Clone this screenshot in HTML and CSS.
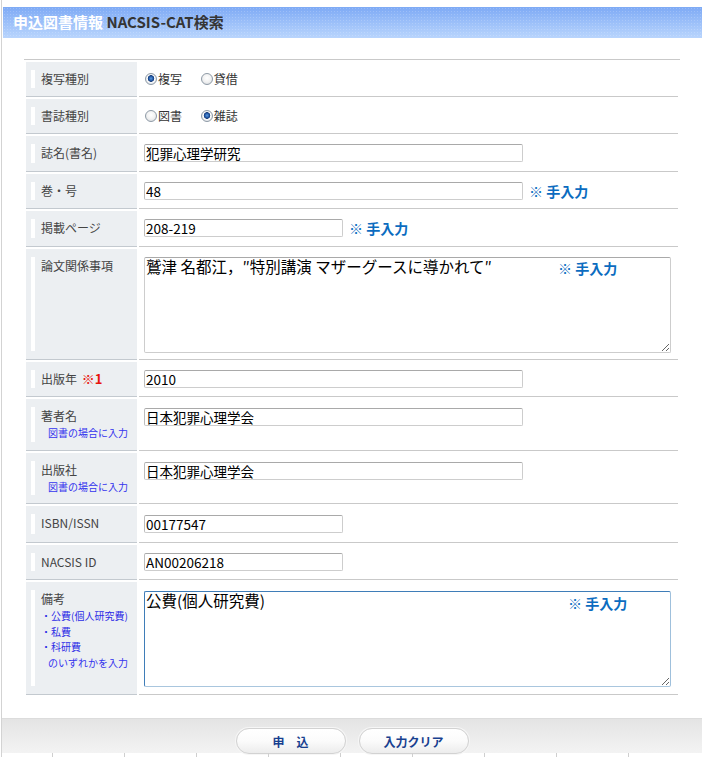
FILE: index.html
```html
<!DOCTYPE html>
<html lang="ja">
<head>
<meta charset="utf-8">
<title>申込図書情報 NACSIS-CAT検索</title>
<link rel="stylesheet" href="styles.css">
</head>
<body>
<div class="page">
  <h1 class="title"><span class="title-main">申込図書情報</span> <span class="title-sub">NACSIS-CAT検索</span></h1>

  <table class="form">
    <tr>
      <th>複写種別</th>
      <td class="choices">
        <label class="choice"><input type="radio" name="kind" checked>複写</label>
        <label class="choice"><input type="radio" name="kind">貸借</label>
      </td>
    </tr>
    <tr>
      <th>書誌種別</th>
      <td class="choices">
        <label class="choice"><input type="radio" name="biblio">図書</label>
        <label class="choice"><input type="radio" name="biblio" checked>雑誌</label>
      </td>
    </tr>
    <tr class="plus">
      <th>誌名(書名)</th>
      <td><input class="field wide" type="text" value="犯罪心理学研究"></td>
    </tr>
    <tr>
      <th>巻・号</th>
      <td><input class="field wide" type="text" value="48"><span class="manual">※ 手入力</span></td>
    </tr>
    <tr class="plus">
      <th>掲載ページ</th>
      <td><input class="field short" type="text" value="208-219"><span class="manual">※ 手入力</span></td>
    </tr>
    <tr class="area-row">
      <th>論文関係事項</th>
      <td class="area-cell">
        <textarea class="area">鷲津 名都江，″特別講演 マザーグースに導かれて″</textarea>
        <span class="manual over over-paper">※ 手入力</span>
      </td>
    </tr>
    <tr>
      <th>出版年 <span class="required">※1</span></th>
      <td><input class="field wide" type="text" value="2010"></td>
    </tr>
    <tr class="note-row">
      <th>著者名<span class="hint">図書の場合に入力</span></th>
      <td class="top9"><input class="field wide" type="text" value="日本犯罪心理学会"></td>
    </tr>
    <tr class="note-row short-note">
      <th>出版社<span class="hint">図書の場合に入力</span></th>
      <td class="top9"><input class="field wide" type="text" value="日本犯罪心理学会"></td>
    </tr>
    <tr class="plus">
      <th>ISBN/ISSN</th>
      <td class="top9"><input class="field short" type="text" value="00177547"></td>
    </tr>
    <tr>
      <th>NACSIS ID</th>
      <td><input class="field short" type="text" value="AN00206218"></td>
    </tr>
    <tr class="area-row memo-row">
      <th>備考
        <span class="hint-item">・公費(個人研究費)</span>
        <span class="hint-item">・私費</span>
        <span class="hint-item">・科研費</span>
        <span class="hint">のいずれかを入力</span>
      </th>
      <td class="area-cell">
        <textarea class="area focused">公費(個人研究費)</textarea>
        <span class="manual over over-memo">※ 手入力</span>
      </td>
    </tr>
  </table>

  <div class="actions">
    <button class="btn" type="button">申　込</button>
    <button class="btn" type="button">入力クリア</button>
  </div>
  <div class="grid">
    <span></span><span></span><span></span><span></span><span></span>
    <span></span><span></span><span></span><span></span>
  </div>
</div>
</body>
</html>
```

FILE: styles.css
```css
html, body {
  margin: 0;
  padding: 0;
  background: #fff;
}

body {
  font-family: "Noto Sans CJK JP", "Noto Sans", sans-serif;
  color: #444;
  overflow: hidden;
}

.page {
  margin-left: 1px;
  border-left: 1px solid #d3d3d3;
  padding-top: 7px;
  height: 757px;
  box-sizing: border-box;
  overflow: hidden;
}

.title {
  margin: 0 0 0 1px;
  height: 31px;
  padding-left: 10px;
  font-size: 15px;
  font-weight: bold;
  line-height: 30px;
  background-color: #9cc0f8;
  background-image:
    radial-gradient(rgba(255, 255, 255, 0.18) 0.7px, transparent 0.9px),
    linear-gradient(#7eaaf5, #b9d5fd);
  background-size: 3px 3px, 100% 100%;
  white-space: nowrap;
}

.title-main { color: #fff; }
.title-sub { color: #353535; }

/* ---------- form table ---------- */
.form {
  margin: 21px 0 0 22px;
  width: 656px;
  border-collapse: separate;
  border-spacing: 2px;
  border-top: 1px solid #c9c9c9;
}

.form th {
  width: 111px;
  box-sizing: border-box;
  padding: 8px 4px 8px 15px;
  text-align: left;
  vertical-align: top;
  font-weight: normal;
  font-size: 12px;
  line-height: 18px;
  color: #444;
  white-space: nowrap;
  background:
    linear-gradient(#fff, #fff) 5px 8px / 4px calc(100% - 16px) no-repeat,
    #eceff2;
  border-bottom: 1px solid #c3c9cf;
}

.form td {
  padding: 8px 0 8px 5px;
  vertical-align: top;
  line-height: 18px;
  font-size: 12px;
  border-bottom: 1px solid #c9c9c9;
  white-space: nowrap;
}

.form tr.plus td { padding-bottom: 9px; }
.form td.top9 { padding-top: 9px; }

.required {
  color: #e8140c;
  font-weight: bold;
  font-size: 13px;
  margin-left: 2px;
}

.hint {
  display: block;
  padding-left: 7px;
  font-size: 10px;
  line-height: 16px;
  color: #3434ee;
}

.note-row th { padding-bottom: 9px; }
.short-note th { padding-bottom: 8px; }

.hint-item {
  display: block;
  font-size: 10px;
  line-height: 15.7px;
  color: #2c2ce6;
}

.memo-row th .hint { line-height: 15.7px; }

/* radios */
.choices { color: #333; }

.choice {
  display: inline-flex;
  align-items: center;
  margin-right: 15px;
  height: 18px;
  vertical-align: top;
}

.choice input {
  appearance: none;
  -webkit-appearance: none;
  width: 12px;
  height: 12px;
  margin: 0 1px 0 1px;
  border-radius: 50%;
  border: 1px solid #8e9aa6;
  box-sizing: border-box;
  background: radial-gradient(circle at 50% 40%, #fff 0, #f2f2f2 50%, #cfd4d9 100%);
}

.choice input:checked {
  background: radial-gradient(circle at 50% 45%, #5a9be0 0, #1c4f9c 2.4px, #153a75 3px, #fff 3.6px, #eef0f2 4.5px, #cdd2d8 100%);
}

/* text inputs */
.field {
  display: inline-block;
  vertical-align: top;
  height: 18px;
  box-sizing: border-box;
  margin: 0;
  padding: 0 1px;
  border: 1px solid #cdcdcd;
  border-top-color: #a9a9a9;
  border-left-color: #bdbdbd;
  border-radius: 2px;
  font-family: "Noto Sans CJK JP", "Noto Sans", sans-serif;
  font-size: 13.5px;
  line-height: 16px;
  color: #000;
  background: #fff;
}

.wide { width: 379px; }
.short { width: 199px; }

.manual {
  display: inline-block;
  vertical-align: top;
  margin-left: 6px;
  font-size: 14px;
  font-weight: bold;
  line-height: 18px;
  color: #0b6cc0;
}

/* textareas */
.area-cell { position: relative; }
.area-row td { padding-bottom: 6px; }
.memo-row td { padding-top: 9px; padding-bottom: 7px; }

.area {
  display: block;
  width: 527px;
  height: 96px;
  box-sizing: border-box;
  margin: 0;
  padding: 0 1px;
  border: 1px solid #cdcdcd;
  border-top-color: #a9a9a9;
  border-radius: 2px;
  font-family: "Noto Sans CJK JP", "Noto Sans", sans-serif;
  font-size: 15.5px;
  line-height: 17px;
  color: #000;
  background: #fff;
  resize: both;
}

.area.focused {
  border-color: #3f7db8;
  border-right-color: #9fc0dc;
  border-bottom-color: #a9c6de;
}

.over {
  position: absolute;
  margin: 0;
}

.over-paper { left: 419px; top: 10px; }
.over-memo { left: 429px; top: 12px; }

/* ---------- footer ---------- */
.actions {
  margin-top: 21px;
  height: 35px;
  box-sizing: border-box;
  padding-top: 9px;
  border-top: 1px solid #dcdcdc;
  background: linear-gradient(#e4e4e4, #f3f3f3);
  display: flex;
  justify-content: center;
  gap: 13px;
}

.btn {
  width: 110px;
  height: 26px;
  margin: 0;
  padding: 0;
  border: 1px solid #d2d2d2;
  border-radius: 13px;
  background: linear-gradient(#ffffff 0%, #fbfbfb 50%, #ececec 100%);
  box-shadow: 0 0 0 1px #f6f6f6;
  font-family: "Noto Sans CJK JP", "Noto Sans", sans-serif;
  font-size: 12px;
  font-weight: bold;
  color: #18408f;
  cursor: pointer;
}

.grid {
  display: flex;
  height: 6px;
  padding-left: 50px;
  overflow: hidden;
}

.grid span {
  flex: 0 0 72px;
  box-sizing: border-box;
  border-left: 1px solid #cfcfcf;
}
```
